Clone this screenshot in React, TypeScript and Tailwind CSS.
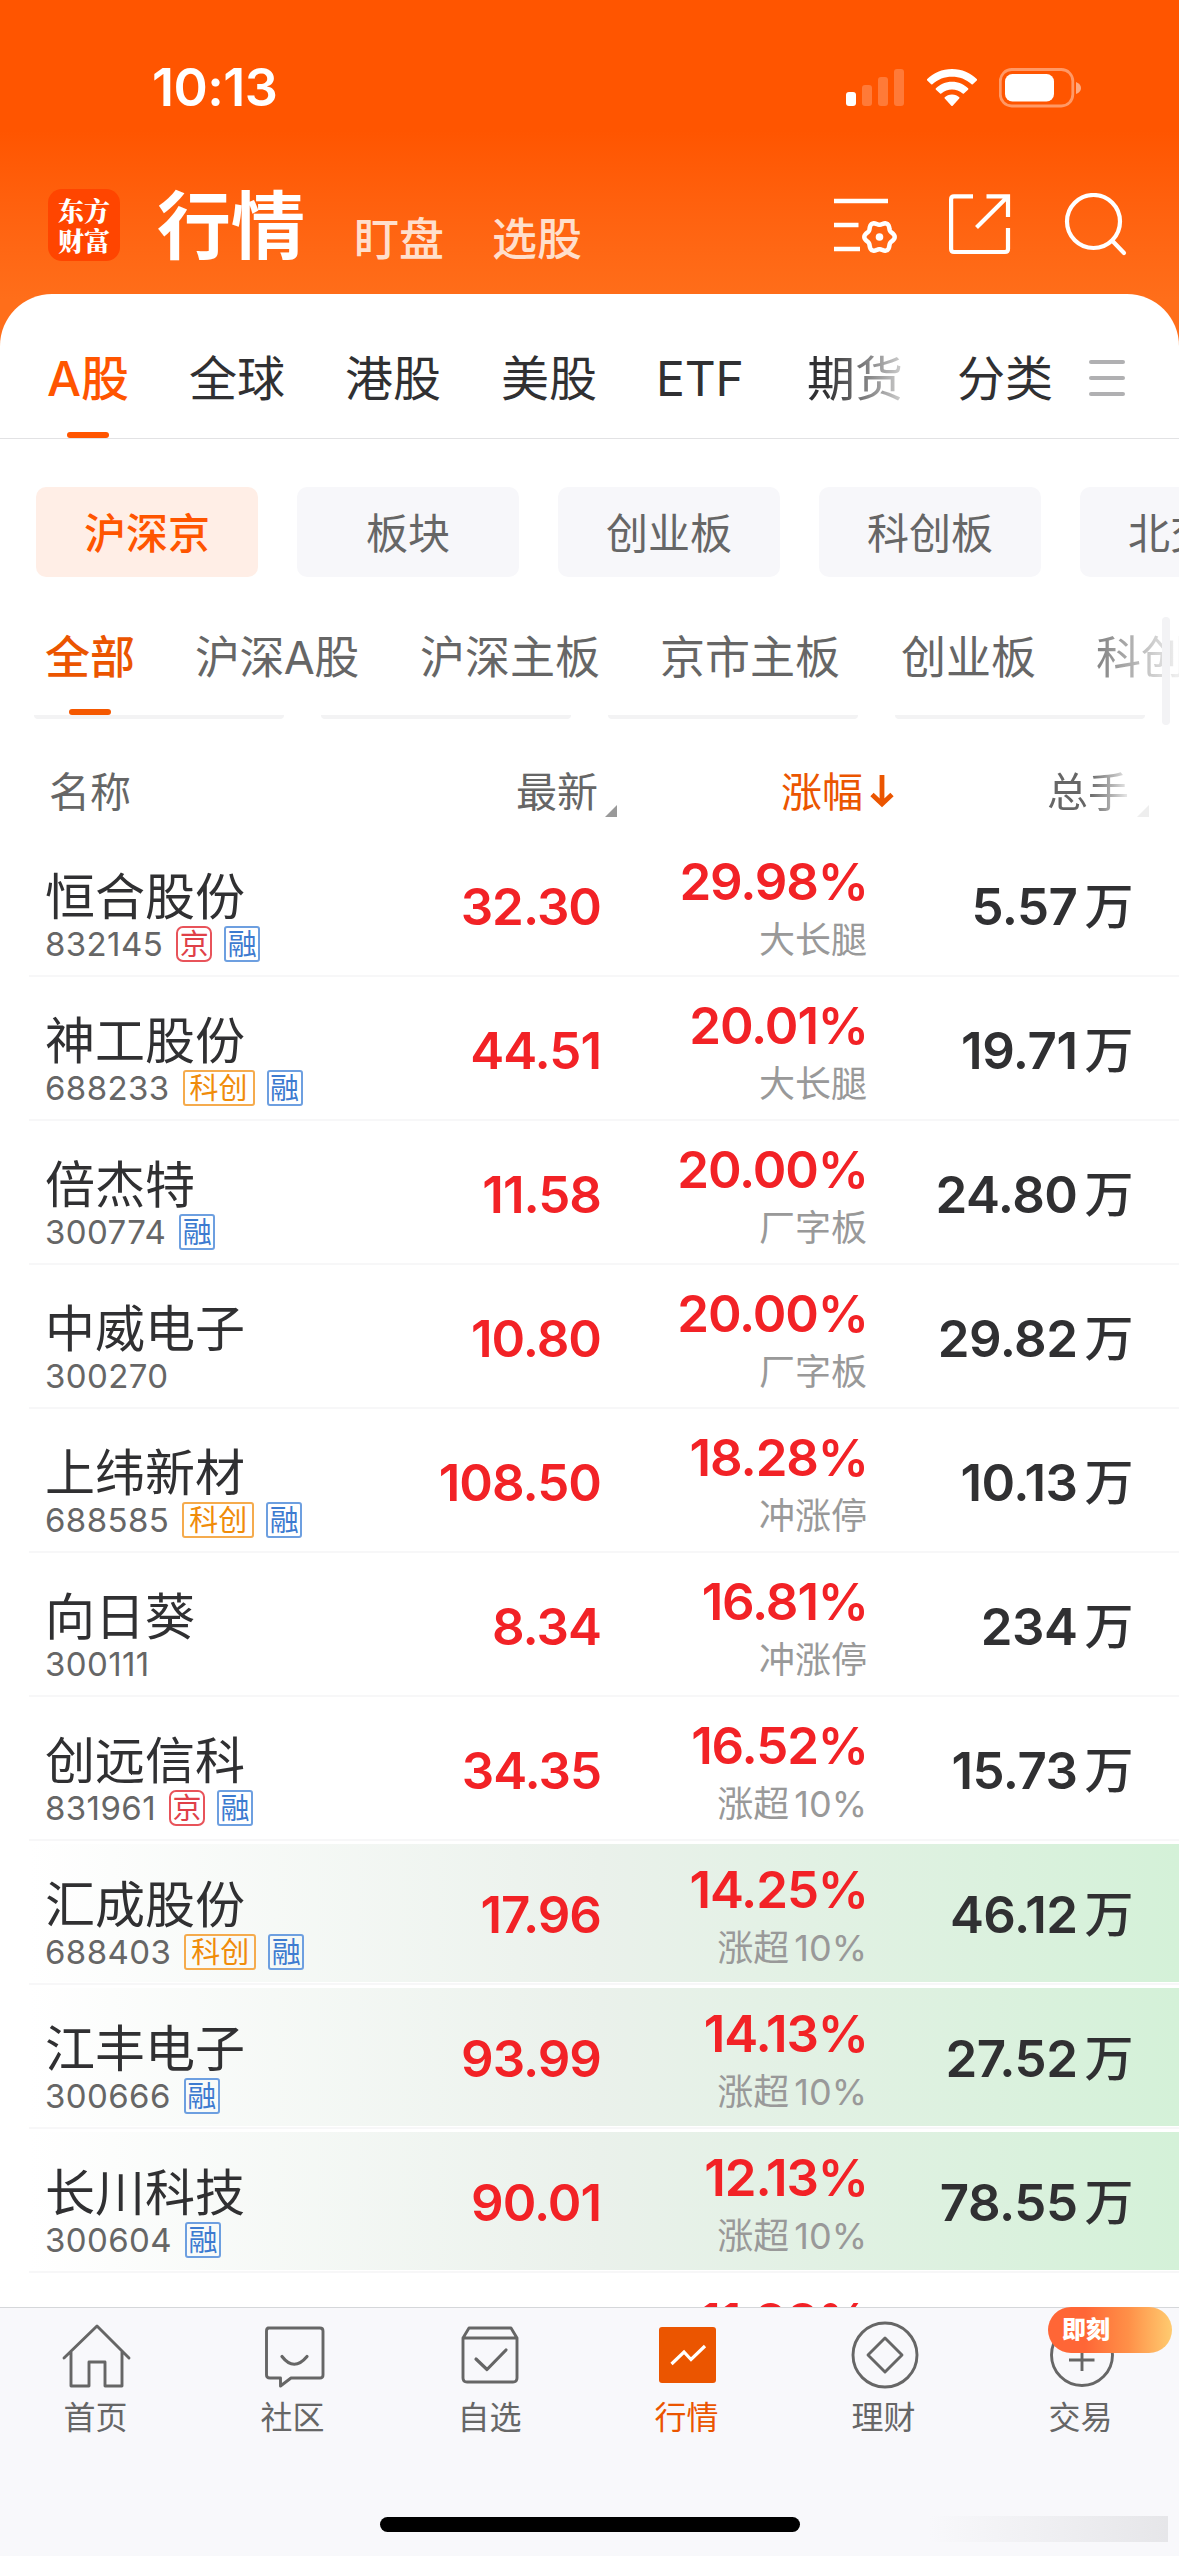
import React from "react";

type Tag = "京" | "融" | "科创";

interface Stock {
  name: string;
  code: string;
  tags: Tag[];
  price: string;
  change: string;
  note: string;
  noteValue?: string;
  volume: string;
  hot?: boolean;
}

const stocks: Stock[] = [
  { name: "恒合股份", code: "832145", tags: ["京", "融"], price: "32.30", change: "29.98%", note: "大长腿", volume: "5.57" },
  { name: "神工股份", code: "688233", tags: ["科创", "融"], price: "44.51", change: "20.01%", note: "大长腿", volume: "19.71" },
  { name: "倍杰特", code: "300774", tags: ["融"], price: "11.58", change: "20.00%", note: "厂字板", volume: "24.80" },
  { name: "中威电子", code: "300270", tags: [], price: "10.80", change: "20.00%", note: "厂字板", volume: "29.82" },
  { name: "上纬新材", code: "688585", tags: ["科创", "融"], price: "108.50", change: "18.28%", note: "冲涨停", volume: "10.13" },
  { name: "向日葵", code: "300111", tags: [], price: "8.34", change: "16.81%", note: "冲涨停", volume: "234" },
  { name: "创远信科", code: "831961", tags: ["京", "融"], price: "34.35", change: "16.52%", note: "涨超", noteValue: "10%", volume: "15.73" },
  { name: "汇成股份", code: "688403", tags: ["科创", "融"], price: "17.96", change: "14.25%", note: "涨超", noteValue: "10%", volume: "46.12", hot: true },
  { name: "江丰电子", code: "300666", tags: ["融"], price: "93.99", change: "14.13%", note: "涨超", noteValue: "10%", volume: "27.52", hot: true },
  { name: "长川科技", code: "300604", tags: ["融"], price: "90.01", change: "12.13%", note: "涨超", noteValue: "10%", volume: "78.55", hot: true },
];

const gearPath =
  Array.from({ length: 96 }, (_, i) => {
    const t = (i / 96) * Math.PI * 2;
    const r = 13.7 + 1.5 * Math.cos(6 * t);
    return `${i ? "L" : "M"}${(45.5 + r * Math.cos(t)).toFixed(2)} ${(42 + r * Math.sin(t)).toFixed(2)}`;
  }).join("") + "Z";

function StatusBar() {
  return (
    <div className="flex h-[176px] items-center pl-[152px] pr-[97px] text-white">
      <span className="text-[52px] font-semibold leading-none tracking-[-0.500px]">10:13</span>
      <div className="ml-auto flex items-center">
        <svg width="60" height="40" viewBox="0 0 60 40" fill="#fff">
          <rect x="0" y="24" width="10" height="14" rx="3" />
          <rect x="16" y="17" width="10" height="21" rx="3" opacity=".22" />
          <rect x="32" y="9" width="10" height="29" rx="3" opacity=".22" />
          <rect x="48" y="1" width="10" height="37" rx="3" opacity=".22" />
        </svg>
        <svg className="ml-[21px]" width="50" height="40" viewBox="0 0 50 40" fill="#fff">
          <path d="M25 1C35 1 43.500 5 50 11.300Q50.200 12 49.500 12.700L45.800 16.300Q45.200 16.600 44.600 16.200C39 11.300 32.500 8.800 25 8.800S11 11.300 5.400 16.200Q4.800 16.600 4.200 16.300L.5 12.700Q-.2 12 0 11.300C6.500 5 15 1 25 1Z" />
          <path d="M25 13.700C31.500 13.700 37 16.300 41.300 20.400Q41.600 21 41 21.700L36.900 25.600Q36.300 26 35.700 25.500C32.500 22.900 29 21.600 25 21.600S17.500 22.900 14.300 25.500Q13.700 26 13.100 25.600L9 21.700Q8.400 21 8.700 20.400C13 16.300 18.500 13.700 25 13.700Z" />
          <path d="M25 26.500C28 26.500 30.600 27.600 32.300 29.300Q32.700 29.900 32.200 30.500L25.700 37.700Q25 38.300 24.300 37.700L17.800 30.500Q17.300 29.900 17.700 29.300C19.400 27.600 22 26.500 25 26.500Z" />
        </svg>
        <svg className="ml-[22px]" width="83" height="40" viewBox="0 0 83 40" fill="#fff">
          <rect x="1.300" y="1.500" width="72.500" height="36.500" rx="11.500" fill="none" stroke="#fff" strokeOpacity=".4" strokeWidth="2.800" />
          <rect x="6" y="6" width="49" height="27.500" rx="7.500" />
          <path d="M77 14Q82 16 82 20T77 26Z" opacity=".5" />
        </svg>
      </div>
    </div>
  );
}

function Header() {
  return (
    <div className="flex h-[118px] items-start pl-[48px] text-white">
      <div
        className="mt-[13px] flex h-[72px] w-[72px] items-center justify-center rounded-[14px] bg-[#ff4500] text-center text-[26px] font-black leading-[30px]"
        style={{ fontFamily: '"Noto Serif CJK SC","Noto Sans CJK SC",serif' }}
      >
        <span>东方<br />财富</span>
      </div>
      <span className="ml-[37px] mt-[10px] text-[74px] font-bold leading-[80px]">行情</span>
      <span className="ml-[49px] mt-[39px] text-[45px] font-medium leading-[50px] text-[#ffdfcc]">盯盘</span>
      <span className="ml-[48px] mt-[39px] text-[45px] font-medium leading-[50px] text-[#ffdfcc]">选股</span>
      <svg className="ml-auto mt-[19px]" width="66" height="64" viewBox="0 0 66 64" fill="none" stroke="#fff" strokeWidth="4.500">
        <path d="M0 6H54M0 30H24.500M0 54H26" />
        <path d={gearPath} strokeWidth="4.500" strokeLinejoin="round" />
        <circle cx="45.500" cy="42" r="3.800" fill="#fff" stroke="none" />
      </svg>
      <svg className="ml-[49px] mt-[18px]" width="62" height="62" viewBox="0 0 62 62" fill="none" stroke="#fff" strokeWidth="4.200">
        <path d="M24 2.300H5Q2.100 2.300 2.100 5.300V55Q2.100 58 5 58H56Q59 58 59 55V34" />
        <path d="M37.500 2.300H59V23M59 2.300L27.500 33.500" />
      </svg>
      <svg className="ml-[53px] mr-[51px] mt-[17px]" width="64" height="64" viewBox="0 0 64 64" fill="none" stroke="#fff" strokeWidth="4.200" strokeLinecap="round">
        <circle cx="29.500" cy="28.500" r="26.500" />
        <path d="M48.500 48L60 60" />
      </svg>
    </div>
  );
}

function MarketTabs() {
  const tab = "w-[156px] shrink-0";
  return (
    <div className="relative flex h-[145px] items-start border-b border-[#e2e2e4] pl-[47px] pt-[57px] text-[48px] leading-[56px] text-[#303032]">
      <span className="w-[142px] shrink-0 font-medium text-[#ff5500]">A股</span>
      <span className={tab}>全球</span>
      <span className={tab}>港股</span>
      <span className="w-[155px] shrink-0">美股</span>
      <span className="w-[151px] shrink-0 tracking-[-0.200px]">ETF</span>
      <span className="w-[150px] shrink-0 bg-linear-to-r from-[#303032] from-[18px] to-[#c8c8c8] to-[92px] bg-clip-text text-transparent">期货</span>
      <span className="w-[132px] shrink-0">分类</span>
      <span className="mt-[9px] flex w-[36px] flex-col gap-[12px]">
        <i className="h-1 rounded-full bg-[#b0b0b2]" />
        <i className="h-1 rounded-full bg-[#b0b0b2]" />
        <i className="h-1 rounded-full bg-[#b0b0b2]" />
      </span>
      <i className="absolute bottom-0 left-[67px] h-[6px] w-[42px] rounded-[3px] bg-[#ff5500]" />
    </div>
  );
}

function Chips() {
  const chip = "flex h-[90px] w-[222px] shrink-0 items-center justify-center rounded-[10px] bg-[#f7f7fa] pt-[3px]";
  return (
    <div className="mt-[48px] flex gap-[39px] pl-[36px] text-[42px] leading-none text-[#666]">
      <span className="flex h-[90px] w-[222px] shrink-0 items-center justify-center rounded-[10px] bg-[#ffeee6] pt-[3px] font-medium text-[#ff5500]">沪深京</span>
      <span className={chip}>板块</span>
      <span className={chip}>创业板</span>
      <span className={chip}>科创板</span>
      <span className={chip}>北交所</span>
    </div>
  );
}

function SubTabs() {
  const edge = "h-[4px] w-[250px] shrink-0 rounded-b-[4px] bg-[#f3f3f4]";
  return (
    <div className="relative h-[148px] overflow-hidden">
      <div className="flex whitespace-nowrap pl-[45px] pt-[53px] text-[45px] leading-[56px] text-[#666]">
        <span className="w-[150px] shrink-0 font-medium text-[#eb5500]">全部</span>
        <span className="w-[225px] shrink-0 tracking-[-0.600px]">沪深A股</span>
        <span className="w-[240px] shrink-0">沪深主板</span>
        <span className="w-[241px] shrink-0">京市主板</span>
        <span className="w-[195px] shrink-0">创业板</span>
        <span className="w-[135px] shrink-0 bg-linear-to-r from-[#888] from-[5px] to-[#eee] to-[80px] bg-clip-text text-transparent">科创板</span>
      </div>
      <div className="flex gap-[37px] pl-[34px] pt-[29px]">
        <i className={edge} />
        <i className={edge} />
        <i className={edge} />
        <i className={edge} />
      </div>
      <i className="absolute left-[69px] top-[132px] h-[6px] w-[42px] rounded-[3px] bg-[#f55800]" />
      <i className="absolute left-[1162px] top-[40px] h-[108px] w-[8px] rounded-[4px] bg-[#f3f3f5]" />
    </div>
  );
}

function Corner({ className }: { className: string }) {
  return (
    <svg className={className} width="12" height="12" viewBox="0 0 12 12" fill="currentColor">
      <path d="M12 0V12H0Z" />
    </svg>
  );
}

function TableHead() {
  return (
    <div className="flex h-[108px] items-start pl-[49px] pt-[42px] text-[41px] leading-[50px] text-[#666]">
      <span className="w-[467px]">名称</span>
      <span>最新</span>
      <Corner className="ml-[7px] mt-[38px] text-[#999]" />
      <span className="ml-[164px] text-[#eb5500]">涨幅</span>
      <svg className="ml-[7px] mt-[8px]" width="24" height="33" viewBox="0 0 24 33" fill="none" stroke="#eb5500" strokeWidth="4.800">
        <path d="M12 0V28M2 19.500L12 29L22 19.500" />
      </svg>
      <span className="ml-[153px] bg-linear-to-r from-[#666] from-[42px] to-[#eee] bg-clip-text text-transparent">总手</span>
      <Corner className="ml-[8px] mt-[38px] text-[#eee]" />
    </div>
  );
}

const tagStyles: Record<Tag, string> = {
  京: "w-[36px] rounded-[7px] border-[#e8535a] text-[#e04048]",
  融: "w-[36px] rounded-[3px] border-[#6d9fe0] text-[#3d7bd0]",
  科创: "w-[72px] rounded-[3px] border-[#f5ab4d] text-[#f08c0a]",
};

function Row({ s }: { s: Stock }) {
  return (
    <div className="relative h-[144px] pt-[3px]">
      <div className={s.hot ? "flex h-[138px] bg-linear-to-r from-white from-[30px] via-[#eaf1eb] via-[600px] to-[#d4f1d8]" : "flex h-[138px]"}>
        <div className="w-[360px] pl-[45px]">
          <div className="mt-[31px] text-[50px] leading-[60px] text-[#303032]">{s.name}</div>
          <div className="-mt-px flex h-[36px] items-center whitespace-nowrap">
            <span className="mr-[13px] text-[33px] leading-[36px] tracking-[0.400px] text-[#666]">{s.code}</span>
            {s.tags.map((t) => (
              <span key={t} className={`mr-[12px] flex h-[36px] items-center justify-center border-2 text-[29px] leading-none ${tagStyles[t]}`}>{t}</span>
            ))}
          </div>
        </div>
        <div className="w-[241px] pt-[45px] text-right text-[51px] font-semibold leading-[52px] tracking-[-1px] text-[#f22226]">{s.price}</div>
        <div className="w-[266px] text-right">
          <div className="-mr-px mt-[20px] text-[51px] font-semibold leading-[52px] tracking-[-1.100px] text-[#f22226]">{s.change}</div>
          <div className="mt-[10px] text-[36px] leading-[44px] text-[#999]">
            {s.note}
            {s.noteValue && <span className="ml-[5px]">{s.noteValue}</span>}
          </div>
        </div>
        <div className="flex w-[266px] items-start justify-end pt-[45px] text-[51px] font-semibold leading-[52px] tracking-[-0.500px] text-[#303032]">
          {s.volume}
          <span className="ml-[7px] text-[49px] font-medium">万</span>
        </div>
      </div>
      <i className="absolute bottom-0 left-[29px] right-0 h-[2px] bg-[#f7f7f8]" />
    </div>
  );
}

function TabItem({ label, active, children }: { label: string; active?: boolean; children: React.ReactNode }) {
  return (
    <div className={active ? "flex flex-1 flex-col items-center text-[#eb5500]" : "flex flex-1 flex-col items-center text-[#666]"}>
      <svg width="72" height="72" viewBox="0 0 72 72" fill="none" stroke="currentColor" strokeWidth="2.900" strokeLinejoin="round" strokeLinecap="round">
        {children}
      </svg>
      <span className="mt-[5px] text-[32px] leading-[40px]">{label}</span>
    </div>
  );
}

function TabBar() {
  return (
    <div className="relative h-[249px] border-t border-[#d5d7da] bg-[#f8f8fb]">
      <div className="-ml-[3px] flex pt-[13px]">
        <TabItem label="首页">
          <path d="M4 37L37 5L69 37M11 31V65H29V41H45V65H62V31" />
        </TabItem>
        <TabItem label="社区">
          <path d="M11 7H63Q66 7 66 10V54Q66 57 63 57H34L23.500 65V57H13Q9.500 57 9.500 54V10Q9.500 7 12 7Z" />
          <path d="M25 35.500Q37 51 50 35.500" strokeWidth="3.200" />
        </TabItem>
        <TabItem label="自选">
          <path d="M9 17V57Q9 61 13 61H59Q63 61 63 57V17H9L15 7H57L63 17" />
          <path d="M22 38L33 48.500L52 29" strokeWidth="3.200" />
        </TabItem>
        <TabItem label="行情" active>
          <rect x="8" y="6" width="57" height="56" rx="3" fill="currentColor" stroke="none" />
          <path d="M20.500 43L33 31L40 38.500L54 25" stroke="#fff" strokeLinecap="butt" strokeLinejoin="miter" strokeWidth="3.200" />
        </TabItem>
        <TabItem label="理财">
          <circle cx="37" cy="34" r="32" />
          <path d="M37 17L54 34L37 51L20 34Z" />
        </TabItem>
        <TabItem label="交易">
          <circle cx="37" cy="34" r="30.500" />
          <path d="M37 21V50M24 39H49.500" strokeLinecap="butt" />
        </TabItem>
      </div>
      <span className="absolute left-[1048px] top-[-1px] flex h-[46px] w-[124px] items-center rounded-full bg-linear-to-r from-[#ff6636] from-30% via-[#ff9048] via-65% to-[#ffcb70] pl-[14px] text-[24px] font-black leading-none text-white">即刻</span>
      <i className="absolute bottom-[14px] left-[930px] h-[26px] w-[238px] bg-linear-to-r from-[#f8f8fb] to-[#e6e6e9]" />
      <i className="absolute bottom-[24px] left-[380px] h-[15px] w-[420px] rounded-full bg-black" />
    </div>
  );
}

export default function App() {
  return (
    <div
      className="flex h-[2556px] w-[1179px] flex-col overflow-hidden bg-linear-to-b from-[#ff5500] from-[130px] to-[#ff6e1a] to-[300px]"
      style={{ fontFamily: 'Inter, "Noto Sans CJK SC", sans-serif' }}
    >
      <StatusBar />
      <Header />
      <div className="flex min-h-0 flex-1 flex-col overflow-hidden rounded-t-[52px] bg-white">
        <MarketTabs />
        <Chips />
        <SubTabs />
        <TableHead />
        <div className="min-h-0 flex-1 overflow-hidden">
          {stocks.map((s) => (
            <Row key={s.code} s={s} />
          ))}
          <div className="w-[868px] pt-[23px] text-right text-[51px] font-semibold leading-[52px] tracking-[-1.100px] text-[#f22226]">11.98%</div>
        </div>
      </div>
      <TabBar />
    </div>
  );
}
